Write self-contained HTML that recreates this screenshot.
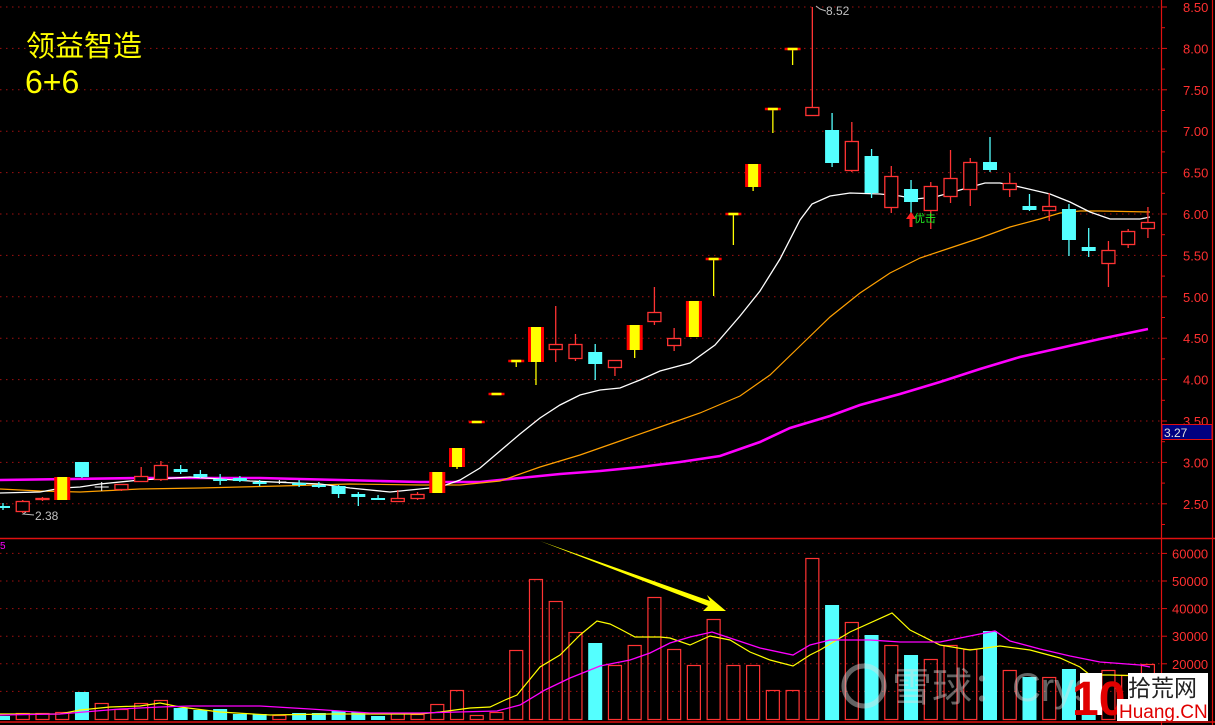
<!DOCTYPE html>
<html><head><meta charset="utf-8"><style>
html,body{margin:0;padding:0;background:#000;width:1215px;height:725px;overflow:hidden}
svg{display:block}
</style></head><body>
<svg id="s" width="1215" height="725" xmlns="http://www.w3.org/2000/svg" font-family="Liberation Sans, sans-serif">
<rect width="1215" height="725" fill="#000"/>
<g id="grid"></g>
<g id="vol"></g>
<g id="ma"></g>
<g id="cd"></g>
<g id="ax"></g>
<text x="26" y="56" font-size="29" fill="#ffff00" font-family="Liberation Sans, Noto Sans CJK SC, sans-serif">领益智造</text>
<text x="25" y="93" font-size="32" fill="#ffff00">6+6</text>
<polyline points="816,6 820,9 826,11" stroke="#bbb" fill="none" stroke-width="1"/>
<text x="826" y="15" font-size="12" fill="#c0c0c0">8.52</text>
<polyline points="26,512 23,514 34,515" stroke="#bbb" fill="none"/>
<text x="35" y="520" font-size="12" fill="#c0c0c0">2.38</text>
<path d="M911,212 L906,219 L909.5,219 L909.5,227 L912.5,227 L912.5,219 L916,219 Z" fill="#ff2020"/>
<text x="914" y="222" font-size="11" fill="#22ee22" font-family="Liberation Sans, Noto Sans CJK SC, sans-serif">优击</text>
<path d="M540,541 L710,601 L707,595 L726,611 L703,611 L708,606 Z" fill="#ffff00"/>
<text x="0" y="549" font-size="10" fill="#ff00ff">5</text>
<g opacity="0.45">
<circle cx="864" cy="686" r="20" fill="none" stroke="#ddd" stroke-width="5"/>
<text x="892" y="701" font-size="40" fill="#ddd" font-family="Liberation Sans, Noto Sans CJK SC, sans-serif">雪球：Crys</text>
</g>
<rect x="1080" y="673" width="22" height="42" fill="#fff"/>
<text x="1072" y="715" font-size="48" font-weight="bold" fill="#e00000">10</text>
<rect x="1128" y="673" width="80" height="26" fill="#fff"/>
<text x="1128" y="696" font-size="23" fill="#222" font-family="Liberation Sans, Noto Sans CJK SC, sans-serif">拾荒网</text>
<rect x="1117" y="699" width="91" height="22" fill="#fff"/>
<text x="1119" y="718" font-size="19" fill="#e00000">Huang.CN</text>
</svg>
<script>
const NS="http://www.w3.org/2000/svg";
function el(p,t,a){const e=document.createElementNS(NS,t);for(const k in a)e.setAttribute(k,a[k]);document.getElementById(p).appendChild(e);return e;}
const py=p=>7+(8.5-p)*82.8, vy=v=>719-v*0.00276;
[8.5,8,7.5,7,6.5,6,5.5,5,4.5,4,3.5,3,2.5].forEach(p=>{const y=py(p);el('grid','line',{x1:0,x2:1160,y1:y,y2:y,stroke:'#a01010','stroke-width':1,'stroke-dasharray':'1.5,4.5'});
const t=el('ax','text',{x:1183,y:y+5,'font-size':13,fill:'#ff3030'});t.textContent=p.toFixed(2);
el('ax','line',{x1:1161,x2:1167,y1:y,y2:y,stroke:'#e01010'});
el('ax','line',{x1:1161,x2:1165,y1:y+20.7,y2:y+20.7,stroke:'#e01010'});});
[60000,50000,40000,30000,20000,10000].forEach(v=>{const y=vy(v);el('grid','line',{x1:0,x2:1160,y1:y,y2:y,stroke:'#a01010','stroke-dasharray':'1.5,4.5'});
const t=el('ax','text',{x:1172,y:y+5,'font-size':13,fill:'#ff3030'});t.textContent=v;el('ax','line',{x1:1161,x2:1167,y1:y,y2:y,stroke:'#e01010'});});
el('ax','line',{x1:0,x2:1215,y1:538.5,y2:538.5,stroke:'#e01010','stroke-width':1.5});
el('ax','line',{x1:0,x2:1215,y1:722,y2:722,stroke:'#e01010','stroke-width':1.5});
el('ax','line',{x1:1161.5,x2:1161.5,y1:0,y2:725,stroke:'#e01010','stroke-width':1.2});
el('ax','line',{x1:1212.5,x2:1212.5,y1:0,y2:725,stroke:'#e01010','stroke-width':1.2});
el('ax','rect',{x:1162,y:424.5,width:50,height:15,fill:'#000080',stroke:'#e01010'});
const t327=el('ax','text',{x:1164,y:437,'font-size':12,fill:'#e0e0e0'});t327.textContent='3.27';
const C=[['c',506,507,503,510],['r',501,512,500,513],['r',498,500,497,501],['y',477,500,477,500],['c',462,477,462,478],
['w',487,487,482,491],['r',484,490,484,491],['r',476,482,467,482],['r',465,480,461,481],['c',469,472,465,474],
['c',474,477,470,478],['c',479,481,474,485],['c',478,481,476,482],['c',482,484,480,486],['w',482,482,480,484],
['c',483,485,480,487],['c',485,486,482,488],['c',486,494,485,498],['c',494,497,492,506],['c',498,499,495,500],
['r',498,502,490,502],['r',494,499,492,500],['y',472,493,472,493],['y',448,467,448,469],['f',422,422,422,423],
['f',394,394,394,395],['f',361,361,361,367],['y',327,362,327,385],['r',344,350,306,362],['r',344,359,334,361],
['c',352,364,344,380],['r',360,368,360,376],['y',325,350,325,358],['r',312,322,287,325],['r',338,346,328,351],
['y',301,337,301,337],['f',259,259,259,296],['f',214,214,214,245],['y',164,187,164,191],['f',109,109,109,133],
['f',49,49,49,65],['r',107,116,7,116],['c',130,163,113,167],['r',141,171,122,172],['c',156,193,149,198],
['r',176,208,166,213],['c',189,202,180,213],['r',186,211,182,229],['r',178,197,150,203],['r',162,190,158,206],
['c',162,170,137,172],['r',183,190,173,197],['c',206,210,194,211],['r',206,211,193,221],['c',209,240,204,256],
['c',247,251,228,257],['r',250,264,241,287],['r',231,245,229,248],['r',222,229,207,238]];
const V=[716,713,713,712,692,703,709,703,700,708,710,709,714,714,715,713,713,711,712,716,713,714,704,690,715,712,650,579,601,632,643,665,645,597,649,665,619,665,665,690,690,558,605,622,635,645,655,659,645,649,631,670,677,677,669,700,670,675,664];
C.forEach((d,i)=>{const x=3+19.74*i;const [t,a,b,wa,wb]=d;
 const vt=V[i];const cy=(t==='c');const vx=x-7;
 if(cy) el('vol','rect',{x:vx,y:vt,width:14,height:720-vt,fill:'#54ffff'});
 else el('vol','rect',{x:vx+0.5,y:vt+0.5,width:13,height:719-vt,fill:'none',stroke:'#ff3333','stroke-width':1.2});
 if(t==='c'){el('cd','line',{x1:x,x2:x,y1:wa,y2:wb,stroke:'#54ffff','stroke-width':1.3});el('cd','rect',{x:x-7,y:a,width:14,height:Math.max(b-a,2),fill:'#54ffff'});}
 else if(t==='r'){el('cd','line',{x1:x,x2:x,y1:wa,y2:wb,stroke:'#ff3333','stroke-width':1.3});el('cd','rect',{x:x-6.5,y:a+0.5,width:13,height:Math.max(b-a-1,1),fill:'#000',stroke:'#ff3333','stroke-width':1.3});}
 else if(t==='y'){el('cd','line',{x1:x,x2:x,y1:wa,y2:wb,stroke:'#ffff00','stroke-width':1.3});el('cd','rect',{x:x-8,y:a,width:16,height:b-a,fill:'#ff0000'});el('cd','rect',{x:x-5,y:a,width:10,height:b-a,fill:'#ffff00'});}
 else if(t==='f'){el('cd','line',{x1:x,x2:x,y1:a,y2:wb,stroke:'#ffff00','stroke-width':1.3});el('cd','line',{x1:x-8,x2:x+8,y1:a,y2:a,stroke:'#ff0000','stroke-width':2.5});el('cd','line',{x1:x-5,x2:x+5,y1:a,y2:a,stroke:'#ffff00','stroke-width':2.5});}
 else {el('cd','line',{x1:x,x2:x,y1:wa,y2:wb,stroke:'#fff'});el('cd','line',{x1:x-7,x2:x+7,y1:a,y2:a,stroke:'#fff'});}
});
function pl(pts,col,w){el('ma','polyline',{points:pts,fill:'none',stroke:col,'stroke-width':w});}
pl('0,480 140,478 260,478 340,480 380,481 420,482 480,482 520,478 560,474 600,471 640,467 680,462 720,456 760,442 790,428 830,416 860,405 900,394 940,382 980,369 1020,357 1060,348 1100,339 1148,329','#ff00ff',2.6);
pl('0,489 40,491 80,492 140,489 200,488 280,486 350,484 420,485 460,485 500,481 540,467 580,455 620,441 660,427 700,413 740,396 770,375 800,346 830,317 860,293 890,273 920,258 950,248 980,238 1010,227 1040,219 1060,213 1080,211 1100,211 1150,212','#ffa000',1.2);
pl('0,493 40,492 62,488 80,487 100,484 140,480 190,477 250,481 320,484 350,488 390,492 420,489 440,487 460,480 480,468 500,451 520,434 540,418 560,405 580,395 600,390 620,388 640,380 660,371 690,363 715,345 740,316 760,291 780,259 800,220 812,204 830,196 850,193 880,194 900,196 915,199 935,197 960,190 985,183 1000,183 1020,187 1050,194 1070,202 1090,212 1110,219 1140,219 1150,217','#ffffff',1.3);
pl('0,714 60,714 80,710 110,707 140,706 160,703 180,707 220,712 270,715 330,714 420,714 440,712 470,708 490,707 505,700 517,695 540,667 560,655 580,635 597,621 610,624 620,629 635,637 660,637 670,638 690,645 710,636 730,640 750,652 770,660 793,666 810,655 820,650 850,632 892,613 910,630 940,645 970,650 1000,646 1030,650 1060,658 1080,667 1090,675 1110,675 1150,676','#ffff00',1.2);
pl('0,715 60,714 120,709 160,707 190,706 260,706 310,709 340,711 370,713 420,713 497,711 520,705 545,690 570,678 600,666 630,660 650,653 670,643 690,637 712,632 730,638 760,648 793,655 810,645 830,640 870,640 900,642 940,642 970,636 995,631 1010,641 1040,649 1070,656 1100,662 1140,665 1150,667','#ff00ff',1.3);
</script>
</body></html>
